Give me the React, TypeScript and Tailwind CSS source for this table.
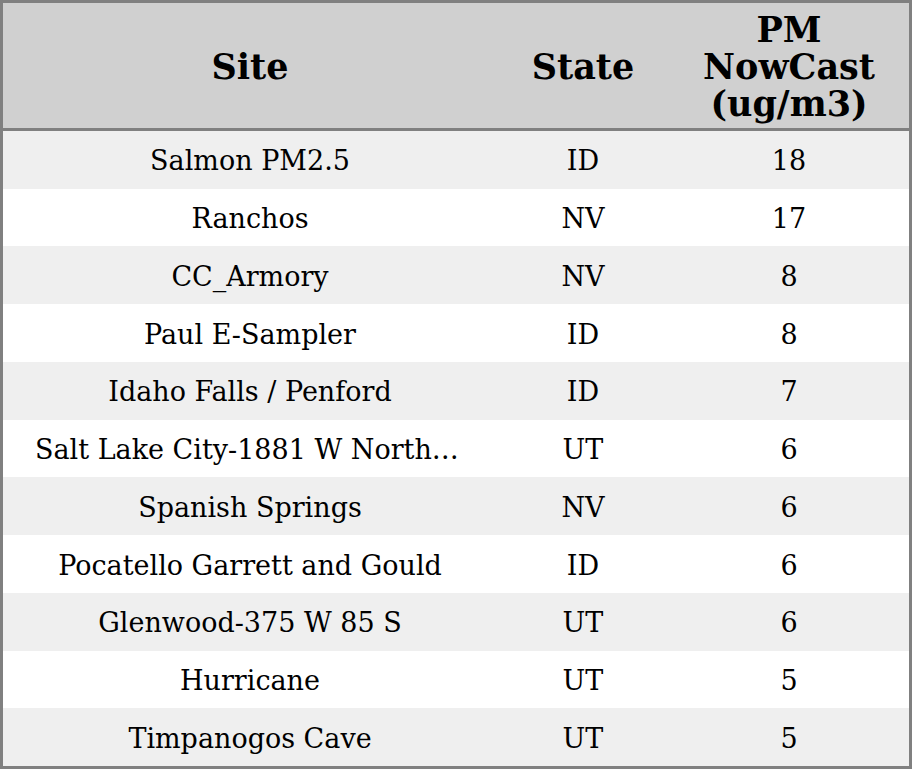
const rows: [string, string, string][] = [
  ["Salmon PM2.5", "ID", "18"],
  ["Ranchos", "NV", "17"],
  ["CC_Armory", "NV", "8"],
  ["Paul E-Sampler", "ID", "8"],
  ["Idaho Falls / Penford", "ID", "7"],
  ["Salt Lake City-1881 W North Temple", "UT", "6"],
  ["Spanish Springs", "NV", "6"],
  ["Pocatello Garrett and Gould", "ID", "6"],
  ["Glenwood-375 W 85 S", "UT", "6"],
  ["Hurricane", "UT", "5"],
  ["Timpanogos Cave", "UT", "5"],
];

export default function App() {
  return (
    <div className="w-[912px] h-[769px] bg-white font-['DejaVu_Serif',serif] text-black">
      <div className="border-[3px] border-[#808080] h-full flex flex-col">
        {/* header */}
        <div className="grid grid-cols-[494px_172px_240px] h-[128px] shrink-0 pt-[2px] bg-[#d0d0d0] border-b-[3px] border-[#808080] font-bold text-[35px] leading-[37px]">
          <div className="flex items-center justify-center text-center">Site</div>
          <div className="flex items-center justify-center text-center">State</div>
          <div className="flex items-center justify-center text-center px-4">PM NowCast (ug/m3)</div>
        </div>
        {rows.map(([site, state, value], i) => (
          <div
            key={site}
            className={`grid flex-1 grid-cols-[494px_172px_240px] items-center pt-[3px] text-[27px] leading-[32px] ${
              i % 2 === 0 ? "bg-[#efefef]" : "bg-white"
            }`}
          >
            <div className="px-8 text-center truncate">{site}</div>
            <div className="text-center">{state}</div>
            <div className="text-center">{value}</div>
          </div>
        ))}
      </div>
    </div>
  );
}
